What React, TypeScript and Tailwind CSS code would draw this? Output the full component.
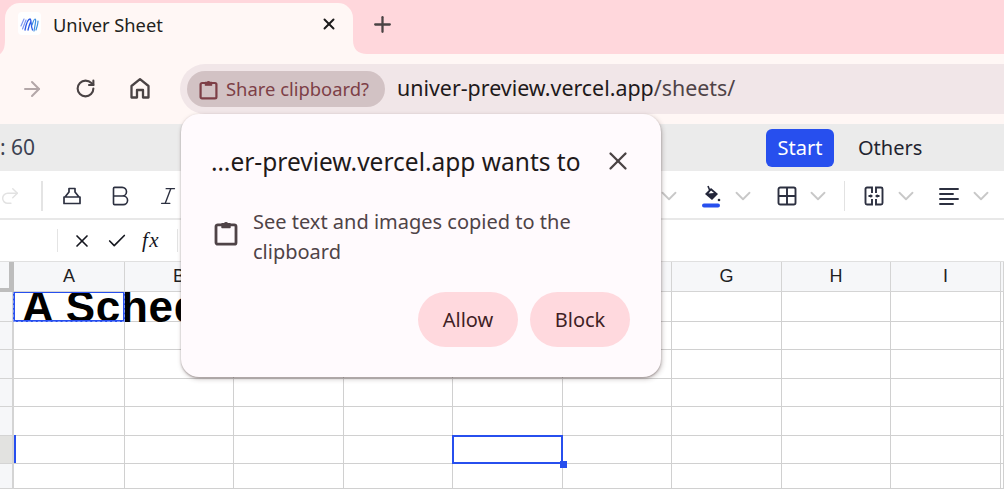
import React from "react";
import { X, Plus, ArrowRight, RotateCw, Check, ChevronDown, Redo2, Bold, Italic } from "lucide-react";

const ui = "font-['Noto_Sans','Open_Sans',sans-serif]";

function Clipboard({ className, color }: { className: string; color: string }) {
  return (
    <svg viewBox="0 0 24 26" className={className} fill="none" stroke={color} strokeWidth="2.8" strokeLinejoin="round">
      <rect x="2" y="4.800" width="20" height="19.400" rx="1.800" />
      <path d="M8 3.800h2.400a1.800 1.800 0 0 1 3.200 0H16v3.800H8z" fill={color} strokeWidth="1.400" />
    </svg>
  );
}

function Chev({ className }: { className: string }) {
  return <ChevronDown className={`shrink-0 text-[#c8c8c8] ${className}`} size={26} strokeWidth={1.7} />;
}

const cols = [111, 109, 110, 109, 110, 109, 110, 109, 110, 3];
const rowsH = [30, 28, 29, 28, 29, 28, 25];
const letters = ["A", "B", "C", "D", "E", "F", "G", "H", "I", ""];
const template = { gridTemplateColumns: `14px ${cols.map((c) => `${c}px`).join(" ")}` };

function Sheet() {
  return (
    <div className="relative overflow-hidden font-['Liberation_Sans',sans-serif]">
      <div className="relative z-[25] grid h-[30px] bg-[#f6f7f9]" style={template}>
        <div className="border-r-[5px] border-b-4 border-[#bdbdbd]" />
        {letters.map((l, i) => (
          <div
            key={i}
            className="flex items-center justify-center border-r border-b border-[#d4d4d4] text-[18px] text-[#1f1f1f] pb-[1px]"
          >
            {l}
          </div>
        ))}
      </div>
      {rowsH.map((h, r) => (
        <div key={r} className="grid" style={{ ...template, height: h }}>
          <div className={`border-r-2 border-b border-[#d4d4d4] ${r === 5 ? "bg-[#e2e2e0]" : "bg-[#f6f7f9]"}`} />
          {cols.map((_, c) => (
            <div key={c} className="relative border-r border-b border-[#d0d0d0]">
              {r === 0 && c === 0 && (
                <span className="absolute left-[8px] top-[-10px] whitespace-nowrap text-[44px] leading-[50px] font-bold tracking-[0.7px] text-black z-10">
                  A Schedule
                </span>
              )}
              {r === 0 && c === 0 && (
                <div className="absolute inset-[-1px] z-20 border-2 border-[#274fee]">
                  <div className="absolute inset-[-2px] border border-dashed border-white/40" />
                </div>
              )}
              {r === 5 && c === 0 && <div className="absolute left-0 top-[-1px] bottom-0 w-[2px] bg-[#274fee]" />}
              {r === 5 && c === 4 && (
                <div className="absolute inset-[-1px] z-20 border-2 border-[#274fee]">
                  <div className="absolute right-[-6px] bottom-[-6px] h-[7px] w-[7px] bg-[#274fee]" />
                </div>
              )}
            </div>
          ))}
        </div>
      ))}
    </div>
  );
}

export default function App() {
  return (
    <div className={`relative h-[489px] w-[1004px] overflow-hidden bg-white ${ui}`}>
      {/* tab strip */}
      <div className="flex h-[54px] bg-[#ffd7dc] pt-[3px] pl-[5px]">
        <div className="relative flex h-[51px] w-[348px] items-start rounded-t-[15px] bg-[#fff7f5] pt-[9px] pl-[13px] pr-[15px]">
          <svg className="absolute left-[-5px] bottom-0 h-[14px] w-[5px]" viewBox="0 0 5 14">
            <path d="M5 0C5 8 3 12 0 14h5z" fill="#fff7f5" />
          </svg>
          <svg className="absolute right-[-14px] bottom-0 h-[14px] w-[14px]" viewBox="0 0 14 14">
            <path d="M0 0C0 9 5 14 14 14H0z" fill="#fff7f5" />
          </svg>
          <svg viewBox="0 0 23 23" className="h-[23px] w-[23px] shrink-0 rounded-[4px] bg-white" fill="none" strokeLinecap="round">
            <path d="M3 14l3-7M4.500 17l3.500-9" stroke="#7f97f2" strokeWidth="1.200" />
            <path d="M7 18C8 13 10 7 12 7C13.500 7 12.500 13 14.500 18M10 18C11 14 12 11 13 9" stroke="#2c5ae8" strokeWidth="1.300" />
            <path d="M14 13C15 10 16 7 17 7C18.500 7 17 13 16 19M18 18C19 15 20 12 20 9" stroke="#3d8fe0" strokeWidth="1.200" />
          </svg>
          <span className="ml-[12px] mt-[1px] text-[18.300px] leading-[24px] text-[#231f20]">Univer Sheet</span>
          <X size={18} strokeWidth={2.600} className="ml-auto mt-[3px] text-[#1c1b1b]" />
        </div>
        <Plus size={25} strokeWidth={2.200} className="ml-[17px] mt-[9px] text-[#4a4344]" />
      </div>

      {/* address row */}
      <div className="flex h-[70px] items-center bg-[#fff7f5]">
        <div className="flex w-[180px] shrink-0 items-center pl-[20px]">
          <ArrowRight size={24} strokeWidth={2} className="text-[#b3a7a8]" />
          <RotateCw size={21} strokeWidth={2.400} className="ml-[31px] -mt-[1px] text-[#4a4344]" />
          <svg viewBox="0 0 24 24" className="ml-[32px] -mt-[2px] h-[24px] w-[24px]" fill="none" stroke="#4a4344" strokeWidth="2.300" strokeLinejoin="round">
            <path d="M3.500 21.500V10L12 3.200 20.500 10v11.500h-5.500v-7.500H9v7.500z" />
          </svg>
        </div>
        <div className="flex h-[50px] flex-1 items-center rounded-l-[25px] bg-[#f1e6e8] pl-[7px]">
          <div className="flex h-[36px] w-[198px] items-center rounded-full bg-[#d2c2c4] pl-[12px]">
            <Clipboard className="h-[21px] w-[19px]" color="#7d3f47" />
            <span className="ml-[8px] text-[18.400px] text-[#7d3f47] whitespace-nowrap">Share clipboard?</span>
          </div>
          <span className="ml-[12px] -mt-[1px] text-[21.400px] text-[#1f1a1b] whitespace-nowrap">
            univer-preview.vercel.app<span className="text-[#4f4347]">/sheets/</span>
          </span>
        </div>
      </div>

      {/* menu bar */}
      <div className="flex h-[47px] items-center bg-[#ebebeb] pt-[1px] text-[#1f2430]">
        <span className="text-[21px] text-[#3c4252] whitespace-nowrap w-[768px] -ml-[2px] pl-[2px]">: 60</span>
        <div className="flex h-[38px] w-[68px] items-center justify-center rounded-[6px] bg-[#274fee] text-white text-[20px]">Start</div>
        <span className="ml-[24px] text-[20px]">Others</span>
      </div>

      {/* tool bar */}
      <div className="flex h-[49px] items-center border-b-2 border-[#e8e8e8] pt-[3px] text-[#2c3040]">
        <Redo2 size={22} strokeWidth={1.600} className="ml-[-1px] shrink-0 text-[#e2e2e2]" />
        <div className="ml-[20px] h-[30px] w-[2px] shrink-0 bg-[#e4e4e4]" />
        <svg viewBox="0 0 22 22" className="ml-[18px] h-[22px] w-[22px] shrink-0" fill="none" stroke="#2c3040" strokeWidth="1.700" strokeLinejoin="round">
          <path d="M8 7V3.500h6V7l4 5H4zM3 12h16v6.500H3z" />
        </svg>
        <Bold size={26} strokeWidth={1.500} className="ml-[24px] shrink-0" />
        <Italic size={22} strokeWidth={1.500} className="ml-[24px] shrink-0" />
        <div className="ml-[477px] flex items-center">
          <Chev className="" />
          <svg viewBox="0 0 22 24" className="ml-[18px] h-[24px] w-[22px] shrink-0">
            <path d="M5 10l6-6 7 6-6 6z" fill="#23263a" />
            <path d="M8.500 9.500l2.500-3 3 2.500z" fill="#ffffff" />
            <path d="M8 2l2 5" stroke="#23263a" strokeWidth="1.600" />
            <circle cx="19" cy="16" r="1.300" fill="#23263a" />
            <rect x="2" y="19.500" width="18" height="4" rx="2" fill="#274fee" />
          </svg>
          <Chev className="ml-[8px]" />
          <svg viewBox="0 0 20 20" className="ml-[21px] h-[20px] w-[20px] shrink-0" fill="none" stroke="#2c3040" strokeWidth="1.900">
            <rect x="1.500" y="1.500" width="17" height="17" rx="1.800" />
            <path d="M10 1.500v17M1.500 10h17" />
          </svg>
          <Chev className="ml-[8px]" />
          <div className="ml-[13px] h-[30px] w-[1px] shrink-0 bg-[#e2e2e2]" />
          <svg viewBox="0 0 20 20" className="ml-[19px] h-[20px] w-[20px] shrink-0" fill="none" stroke="#2c3040" strokeWidth="1.900">
            <path d="M8 7V1.500H3a1.500 1.500 0 0 0-1.500 1.500v14A1.500 1.500 0 0 0 3 18.500h5V13M12 7V1.500h5A1.500 1.500 0 0 1 18.500 3v14a1.500 1.500 0 0 1-1.500 1.500h-5V13" />
            <path d="M4.500 10H7M15.500 10H13" strokeWidth="2" />
            <path d="M6.500 8l2.500 2-2.500 2zM13.500 8L11 10l2.500 2z" fill="#2c3040" stroke="none" />
          </svg>
          <Chev className="ml-[9px]" />
          <svg viewBox="0 0 20 18" className="ml-[20px] h-[18px] w-[20px] shrink-0" fill="none" stroke="#2c3040" strokeWidth="1.900" strokeLinecap="round">
            <path d="M1 2h18M1 7h13M1 12h18M1 17h13" />
          </svg>
          <Chev className="ml-[9px]" />
        </div>
      </div>

      {/* formula bar */}
      <div className="flex h-[42px] items-center border-b border-[#e0e0e0] text-[#15171f]">
        <div className="ml-[57px] h-[23px] w-[1px] bg-[#e4e4e4]" />
        <X size={20} strokeWidth={2} className="ml-[14px]" />
        <Check size={22} strokeWidth={1.800} className="ml-[14px]" />
        <span className="ml-[14px] w-[22px] font-['Liberation_Serif',serif] italic text-[21px] font-medium tracking-[1.500px]">fx</span>
        <div className="ml-[13px] h-[23px] w-[1px] bg-[#e4e4e4]" />
      </div>

      <Sheet />

      {/* permission popup */}
      <div className="absolute left-[181px] top-[114px] z-30 h-[263px] w-[480px] rounded-[18px] bg-[#fffafd] pl-[30px] pr-[31px] pt-[34px] shadow-[0_1px_2px_rgba(60,40,40,0.35),1px_2px_5px_rgba(60,40,40,0.28)]">
        <div className="flex h-[28px] items-center justify-between">
          <span className="text-[24.500px] leading-[28px] text-[#1f1a1b] whitespace-nowrap">…er-preview.vercel.app wants to</span>
          <X size={30} strokeWidth={1.800} className="mr-[-3px] -mt-[2px] shrink-0 text-[#4a4344]" />
        </div>
        <div className="mt-[31px] flex">
          <Clipboard className="ml-[3px] mt-[13px] h-[26px] w-[24px] shrink-0" color="#4f4347" />
          <p className="ml-[15px] text-[20px] leading-[30px] text-[#4f4347]">
            See text and images copied to the clipboard
          </p>
        </div>
        <div className="mt-[25px] flex justify-end gap-[12px]">
          <div className="flex h-[55px] w-[100px] items-center justify-center rounded-full bg-[#ffd9de] text-[20px] text-[#3f1f25]">Allow</div>
          <div className="flex h-[55px] w-[100px] items-center justify-center rounded-full bg-[#ffd9de] text-[20px] text-[#3f1f25]">Block</div>
        </div>
      </div>
    </div>
  );
}
